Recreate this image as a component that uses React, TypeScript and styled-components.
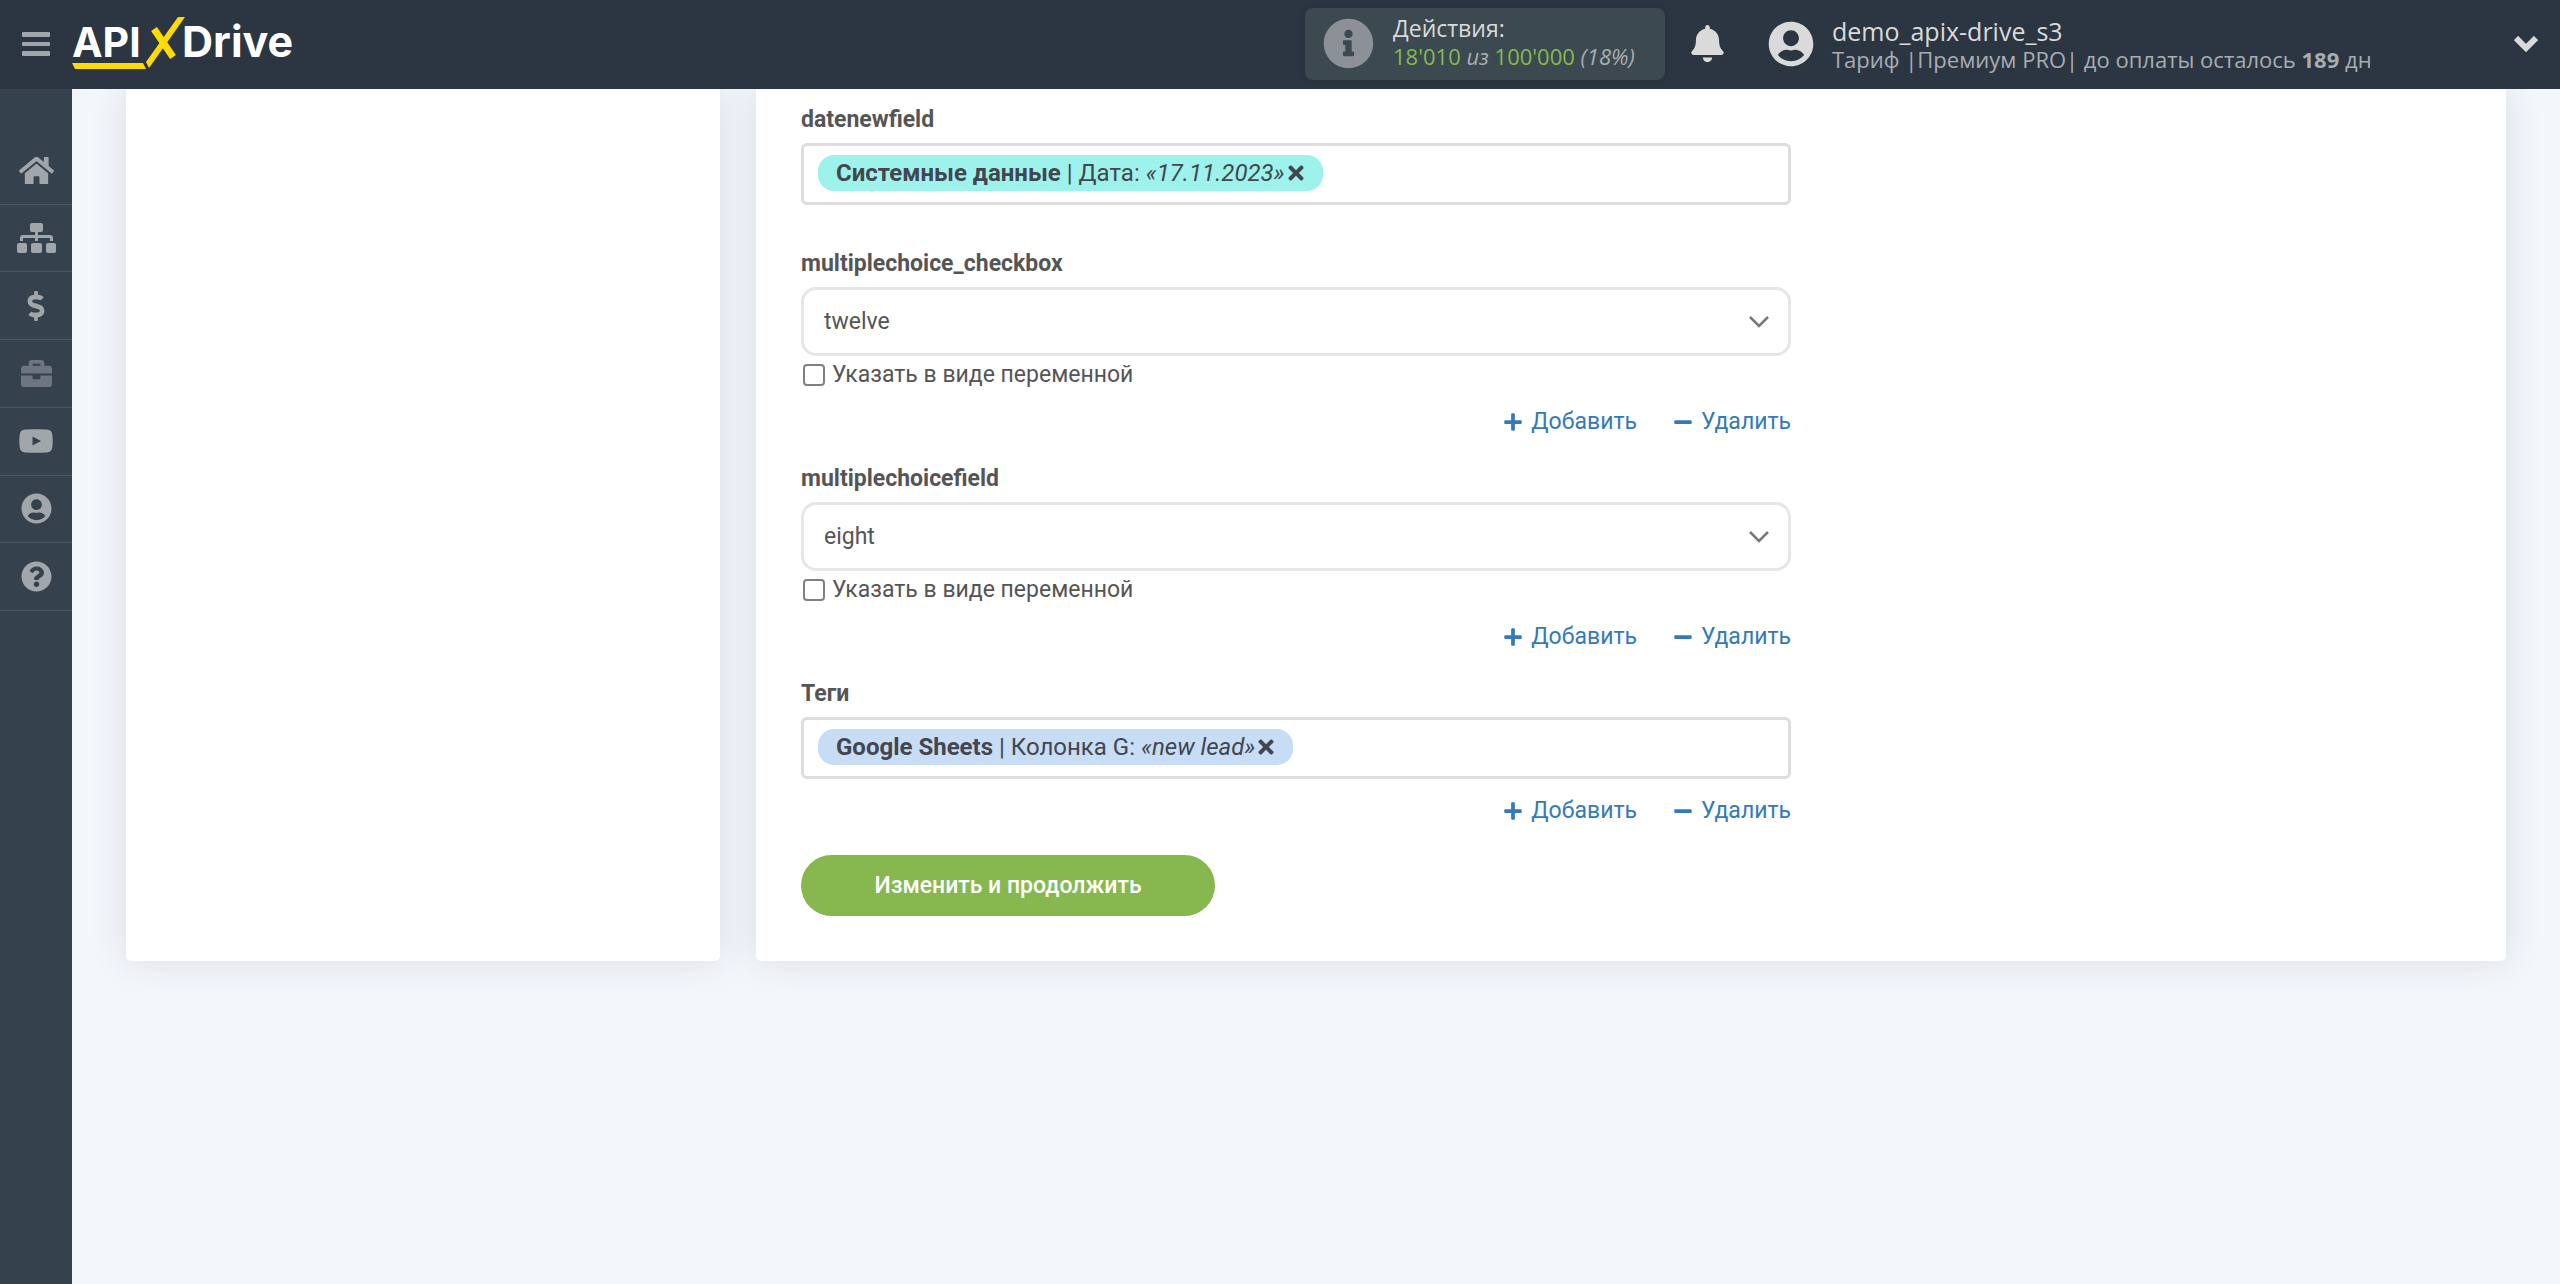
import React, { useState } from 'react';
import styled, { createGlobalStyle } from 'styled-components';
import {
  FaBell,
  FaBriefcase,
  FaDollarSign,
  FaHome,
  FaInfoCircle,
  FaMinus,
  FaPlus,
  FaQuestionCircle,
  FaTimes,
  FaUserCircle,
} from 'react-icons/fa';

const GlobalStyle = createGlobalStyle`
  *, *::before, *::after { box-sizing: border-box; }
  body {
    margin: 0;
    background: #f3f6fb;
    color: #555;
    font: 400 23px/30px Roboto, "Noto Sans", sans-serif;
  }
  button, input, select { font: inherit; color: inherit; }
  svg { display: block; flex: none; }
`;

const Page = styled.div`
  display: flex;
  flex-direction: column;
  min-height: 100vh;
`;

const Header = styled.header`
  display: flex;
  align-items: center;
  height: 89px;
  padding: 0 22px 2px;
  background: #2b3642;
  color: #dadada;
  font-family: "Open Sans", "Noto Sans", sans-serif;
  position: relative;
  z-index: 1;
`;

const IconButton = styled.button`
  display: flex;
  padding: 0;
  border: 0;
  background: none;
  color: ${({ $color }: { $color?: string }) => $color || '#dadada'};
  cursor: pointer;
`;

const LogoLink = styled.a`
  display: flex;
  margin: 0 auto 0 22px;
  text-decoration: none;
`;

const Usage = styled.div`
  display: flex;
  align-items: center;
  gap: 19px;
  width: 360px;
  height: 72px;
  padding-left: 18px;
  border-radius: 8px;
  background: #3c4950;
  box-shadow: 0 0 8px rgba(0, 0, 0, 0.12);

  > svg { color: #8b9197; }
`;

const Lines = styled.div`
  display: flex;
  flex-direction: column;
  line-height: 28px;
  white-space: nowrap;
`;

const UsageLines = styled(Lines)`
  padding-bottom: 4px;
`;

const AccountLines = styled(Lines)`
  padding-top: 2px;
  font-size: 25px;
`;

const Counter = styled.span`
  color: #a9adb0;
  font-size: 22px;
  b { color: #86b94f; font-weight: 400; }
`;

const Tariff = styled.span`
  color: #a9adb2;
  font-size: 22px;
`;

const BellButton = styled(IconButton)`
  margin: 0 42px 0 24px;
`;

const Account = styled.div`
  display: flex;
  align-items: center;
  gap: 18px;
  width: 746px;
`;

const Body = styled.div`
  display: flex;
  flex: 1;
`;

const Sidebar = styled.nav`
  flex: none;
  width: 72px;
  padding-top: 48px;
  background: #36414e;
`;

const Menu = styled.ul`
  display: grid;
  grid-auto-rows: 1fr;
  height: 474px;
  margin: 0;
  padding: 0;
  list-style: none;
`;

const MenuItem = styled.li`
  display: grid;
  border-bottom: 1px solid #4b5663;
`;

const MenuLink = styled.a`
  display: grid;
  place-items: center;
  color: ${({ $dim }: { $dim?: boolean }) => ($dim ? '#6d7680' : '#a1a6ab')};
`;

const Main = styled.main`
  display: grid;
  grid-template-columns: minmax(0, 594fr) minmax(0, 1750fr);
  gap: 36px;
  flex: 1;
  align-self: flex-start;
  padding: 0 54px;
`;

const Card = styled.section`
  padding: 15px 45px 45px;
  border-radius: 0 0 5px 5px;
  background: #fff;
  box-shadow: 0 0 36px rgba(50, 65, 70, 0.13);
`;

const Form = styled.form`
  max-width: 990px;
`;

const Field = styled.div`
  display: flex;
  flex-direction: column;
  margin-bottom: ${({ $gap }: { $gap: number }) => $gap}px;
`;

const Label = styled.label`
  align-self: flex-start;
  margin-bottom: 7px;
  font-weight: 700;
  line-height: 32px;
`;

const TagBox = styled.div`
  display: flex;
  align-items: flex-start;
  height: 62px;
  padding: 9px 14px;
  border: 3px solid #ddd;
  border-radius: 6px;
`;

const Chip = styled.span`
  display: flex;
  align-items: center;
  height: 36px;
  padding: 0 16px 0 18px;
  border-radius: 16px;
  background: ${({ $color }: { $color: string }) => $color};
  color: #434650;
  white-space: pre;
  font-size: 24px;
`;

const TagInput = styled.input`
  flex: 1;
  min-width: 0;
  height: 36px;
  border: 0;
  outline: 0;
  background: none;
`;

const SelectBox = styled.div`
  display: grid;
  align-items: center;

  > * { grid-area: 1 / 1; }
  > svg { justify-self: end; margin-right: 22px; pointer-events: none; }
`;

const Select = styled.select`
  width: 100%;
  height: 69px;
  padding: 0 20px;
  border: 3px solid #e6e6e7;
  border-radius: 15px;
  background: #fff;
  appearance: none;
`;

const CheckRow = styled.label`
  display: flex;
  align-items: center;
  gap: 7px;
  margin-top: 4px;
  align-self: flex-start;
`;

const Checkbox = styled.input`
  width: 22px;
  height: 22px;
  margin: 0 0 0 2px;
  border: 2px solid #808080;
  border-radius: 4px;
  background: #fff;
  appearance: none;

  &:checked { border-color: #337ab7; background: #337ab7; }
`;

const Actions = styled.div`
  display: flex;
  justify-content: flex-end;
  gap: 36px;
  margin-top: 17px;
`;

const Action = styled.a`
  display: flex;
  align-items: center;
  gap: 8px;
  color: #337ab7;
  text-decoration: none;
`;

const Submit = styled.button`
  display: block;
  width: 414px;
  height: 61px;
  border: 0;
  border-radius: 31px;
  background: #86b84f;
  color: #fff;
  font-weight: 500;
  cursor: pointer;
`;

const Logo = () => (
  <svg width="222" height="56" viewBox="0 1 222 56" fontFamily="Inter, sans-serif" fontWeight="700">
    <text x="0" y="42" fill="#fff" fontSize="41">API</text>
    <text x="110" y="42" fill="#fff" fontSize="43">Drive</text>
    <path d="M0 48H71L74 54H3Z" fill="#ffdb00" />
    <path d="M106 2H113L77 53L74 47Z" fill="#ffdb00" />
    <path d="M82 14L101 42" stroke="#ffdb00" strokeWidth="7" />
  </svg>
);

const BarsIcon = () => (
  <svg width="28" height="24" viewBox="0 0 28 24" fill="currentColor">
    <rect width="28" height="5" rx="1" />
    <rect y="10" width="28" height="4" rx="1" />
    <rect y="19" width="28" height="5" rx="1" />
  </svg>
);

const ChevronIcon = () => (
  <svg width="24" height="16" viewBox="0 0 24 16" fill="none" stroke="currentColor" strokeWidth="6">
    <path d="M2 2L12 12L22 2" />
  </svg>
);

const SitemapIcon = () => (
  <svg width="39" height="30" viewBox="0 0 39 30" fill="currentColor">
    <rect x="13" width="13" height="9" rx="2" />
    <rect y="20" width="10" height="10" rx="2" />
    <rect x="14" y="20" width="11" height="10" rx="2" />
    <rect x="29" y="20" width="10" height="10" rx="2" />
    <path d="M4.500 18V15Q4.500 13.500 6 13.500H33Q34.500 13.500 34.500 15V18M19.500 8V18" fill="none" stroke="currentColor" strokeWidth="3" />
  </svg>
);

const VideoIcon = () => (
  <svg width="34" height="24" viewBox="0 0 34 24" fill="currentColor">
    <path fillRule="evenodd" d="M6 0.500Q17 -0.200 28 0.500Q32.500 0.800 33.200 5Q34.200 12 33.200 19Q32.500 23 28 23.400Q17 24.200 6 23.400Q1.500 23 0.800 19Q-0.200 12 0.800 5Q1.500 0.800 6 0.500ZM13.500 7.500V16.500L22 12Z" />
  </svg>
);

const ActionLinks = () => (
  <Actions>
    <Action href="#add"><FaPlus size={20} />Добавить</Action>
    <Action href="#remove"><FaMinus size={20} />Удалить</Action>
  </Actions>
);

type TagProps = { id: string; label: string; source: string; field: string; value: string; color: string; gap: number; actions?: boolean };

const TagField = ({ id, label, source, field, value, color, gap, actions }: TagProps) => (
  <Field $gap={gap}>
    <Label htmlFor={id}>{label}</Label>
    <TagBox>
      <Chip $color={color}>
        <b>{source}</b> | {field}: <i>«{value}»</i>
        <IconButton type="button" $color="#434650" aria-label="Удалить"><FaTimes size={22} /></IconButton>
      </Chip>
      <TagInput id={id} />
    </TagBox>
    {actions && <ActionLinks />}
  </Field>
);

const ChoiceField = ({ id, value }: { id: string; value: string }) => {
  const [asVariable, setAsVariable] = useState(false);
  return (
    <Field $gap={26}>
      <Label htmlFor={id}>{id}</Label>
      <SelectBox>
        <Select id={id} defaultValue={value}><option>{value}</option></Select>
        <svg width="20" height="12" viewBox="0 0 20 12" fill="none" stroke="#777" strokeWidth="2.5">
          <path d="M1 1L10 10L19 1" />
        </svg>
      </SelectBox>
      <CheckRow>
        <Checkbox type="checkbox" checked={asVariable} onChange={(e) => setAsVariable(e.target.checked)} />
        Указать в виде переменной
      </CheckRow>
      <ActionLinks />
    </Field>
  );
};

const menu = [
  { name: 'Главная', icon: <FaHome size={35} /> },
  { name: 'Связи', icon: <SitemapIcon /> },
  { name: 'Тарифы', icon: <FaDollarSign size={30} /> },
  { name: 'Проекты', icon: <FaBriefcase size={31} />, dim: true },
  { name: 'Видео', icon: <VideoIcon /> },
  { name: 'Профиль', icon: <FaUserCircle size={31} /> },
  { name: 'Помощь', icon: <FaQuestionCircle size={31} /> },
];

export default function App() {
  return (
    <Page>
      <GlobalStyle />
      <Header>
        <IconButton $color="#a1a6ab" aria-label="Меню"><BarsIcon /></IconButton>
        <LogoLink href="#home" aria-label="APIXDrive"><Logo /></LogoLink>
        <Usage>
          <FaInfoCircle size={51} />
          <UsageLines>
            <span>Действия:</span>
            <Counter><b>18'010</b> <i>из</i> <b>100'000</b> <i>(18%)</i></Counter>
          </UsageLines>
        </Usage>
        <BellButton aria-label="Уведомления"><FaBell size={37} /></BellButton>
        <Account>
          <FaUserCircle size={46} />
          <AccountLines>
            <span>demo_apix-drive_s3</span>
            <Tariff>Тариф |Премиум PRO| до оплаты осталось <b>189</b> дн</Tariff>
          </AccountLines>
        </Account>
        <IconButton aria-label="Открыть меню"><ChevronIcon /></IconButton>
      </Header>
      <Body>
        <Sidebar>
          <Menu>
            {menu.map(({ name, icon, dim }) => (
              <MenuItem key={name}>
                <MenuLink href="#menu" aria-label={name} $dim={dim}>{icon}</MenuLink>
              </MenuItem>
            ))}
          </Menu>
        </Sidebar>
        <Main>
          <Card />
          <Card>
            <Form>
              <TagField id="datenewfield" label="datenewfield" source="Системные данные" field="Дата" value="17.11.2023" color="#9df3ec" gap={43} />
              <ChoiceField id="multiplechoice_checkbox" value="twelve" />
              <ChoiceField id="multiplechoicefield" value="eight" />
              <TagField id="tags" label="Теги" source="Google Sheets" field="Колонка G" value="new lead" color="#c7ddf5" gap={29} actions />
              <Submit type="button">Изменить и продолжить</Submit>
            </Form>
          </Card>
        </Main>
      </Body>
    </Page>
  );
}
